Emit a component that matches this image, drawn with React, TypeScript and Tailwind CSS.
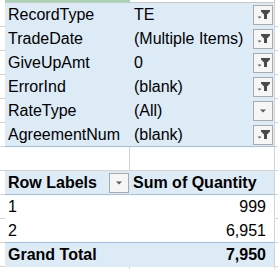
import React from "react";

const filters = [
  { label: "RecordType", value: "TE", icon: "filter" },
  { label: "TradeDate", value: "(Multiple Items)", icon: "filter" },
  { label: "GiveUpAmt", value: "0", icon: "filter" },
  { label: "ErrorInd", value: "(blank)", icon: "filter" },
  { label: "RateType", value: "(All)", icon: "arrow" },
  { label: "AgreementNum", value: "(blank)", icon: "filter" },
];

const rows = [
  { label: "1", value: "999" },
  { label: "2", value: "6,951" },
];

function DropButton({ kind }: { kind: "filter" | "arrow" }) {
  return (
    <div className="ml-auto h-[20px] w-[20px] shrink-0 border border-[#ababab] bg-[#f6f6f6]">
      <svg width="18" height="18" viewBox="0 0 18 18">
        {kind === "filter" ? (
          <>
            <polygon points="7,4 16,4 16,5.5 13,8.5 13,13 10,13 10,8.5 7,5.5" fill="#4a4a4a" />
            <polygon points="3.5,10.5 7.5,10.5 5.5,12.5" fill="#5a5a5a" />
          </>
        ) : (
          <polygon points="6,7.5 12,7.5 9,10.5" fill="#5a5a5a" />
        )}
      </svg>
    </div>
  );
}

export default function App() {
  return (
    <div className="w-[278px] h-[269px] overflow-hidden bg-white font-['Liberation_Sans',Arial,sans-serif] text-[16px] text-black leading-none">
      {/* strip above the pivot */}
      <div className="flex h-[3px]">
        <div className="w-[5px]" />
        <div className="w-[125px] border-b border-[#c8c8c8] bg-[#a8d5b0]" />
        <div className="w-[145px] border-b border-r border-[#c8c8c8]" />
        <div className="w-[3px]" />
      </div>

      {/* page filters */}
      {filters.map((f, i) => (
        <div key={f.label} className="flex h-[24px]">
          <div className="w-[5px] border-b border-[#d4d4d4]" />
          <div
            className={
              i === filters.length - 1
                ? "flex w-[125px] items-center border-b border-[#9bc2e6] bg-[#ddebf7] pl-[3px] pt-[1px]"
                : "flex w-[125px] items-center border-b border-transparent bg-[#ddebf7] pl-[3px] pt-[1px]"
            }
          >
            {f.label}
          </div>
          <div
            className={
              i === filters.length - 1
                ? "flex w-[145px] items-center border-b border-r border-b-[#9bc2e6] border-r-[#d4d4d4] bg-[#ddebf7] pl-[4px] pr-[1px]"
                : "flex w-[145px] items-center border-b border-r border-b-transparent border-r-[#d4d4d4] bg-[#ddebf7] pl-[4px] pr-[1px]"
            }
          >
            <span className="pt-[1px]">{f.value}</span>
            <DropButton kind={f.icon as "filter" | "arrow"} />
          </div>
          <div className="w-[3px] border-b border-[#d4d4d4]" />
        </div>
      ))}

      {/* empty row */}
      <div className="flex h-[24px]">
        <div className="w-[5px] border-b border-[#d4d4d4]" />
        <div className="w-[125px] border-b border-r border-[#d4d4d4]" />
        <div className="w-[145px] border-b border-r border-[#d4d4d4]" />
        <div className="w-[3px] border-b border-[#d4d4d4]" />
      </div>

      {/* header */}
      <div className="flex h-[24px] font-bold">
        <div className="w-[5px] border-b border-[#d4d4d4]" />
        <div className="flex w-[125px] items-center border-b border-r border-b-[#9bc2e6] border-r-transparent bg-[#ddebf7] pl-[3px]">
          <span className="pt-[1px]">Row Labels</span>
          <DropButton kind="arrow" />
        </div>
        <div className="flex w-[145px] items-center border-b border-r border-b-[#9bc2e6] border-r-[#d4d4d4] bg-[#ddebf7] pl-[3px] pt-[1px]">
          Sum of Quantity
        </div>
        <div className="w-[3px] border-b border-[#d4d4d4]" />
      </div>

      {/* body */}
      {rows.map((r, i) => (
        <div key={r.label} className="flex h-[24px]">
          <div className="w-[5px] border-b border-[#d4d4d4]" />
          <div
            className={
              i === rows.length - 1
                ? "flex w-[125px] items-center border-b border-[#9bc2e6] pl-[3px] pt-[1px]"
                : "flex w-[125px] items-center border-b border-transparent pl-[3px] pt-[1px]"
            }
          >
            {r.label}
          </div>
          <div
            className={
              i === rows.length - 1
                ? "flex w-[145px] items-center justify-end border-b border-r border-b-[#9bc2e6] border-r-[#d4d4d4] pr-[8px] pt-[1px]"
                : "flex w-[145px] items-center justify-end border-b border-r border-b-transparent border-r-[#d4d4d4] pr-[8px] pt-[1px]"
            }
          >
            {r.value}
          </div>
          <div className="w-[3px] border-b border-[#d4d4d4]" />
        </div>
      ))}

      {/* grand total */}
      <div className="flex h-[24px] font-bold">
        <div className="w-[5px] border-b border-[#d4d4d4]" />
        <div className="flex w-[125px] items-center border-b border-transparent bg-[#ddebf7] pl-[3px] pt-[1px]">
          Grand Total
        </div>
        <div className="flex w-[145px] items-center justify-end border-b border-r border-b-transparent border-r-[#d4d4d4] bg-[#ddebf7] pr-[8px] pt-[1px]">
          7,950
        </div>
        <div className="w-[3px] border-b border-[#d4d4d4]" />
      </div>

      {/* next row */}
      <div className="flex h-[24px]">
        <div className="w-[5px] border-b border-[#d4d4d4]" />
        <div className="w-[125px] border-b border-r border-[#d4d4d4]" />
        <div className="w-[145px] border-b border-r border-[#d4d4d4]" />
        <div className="w-[3px] border-b border-[#d4d4d4]" />
      </div>
    </div>
  );
}
